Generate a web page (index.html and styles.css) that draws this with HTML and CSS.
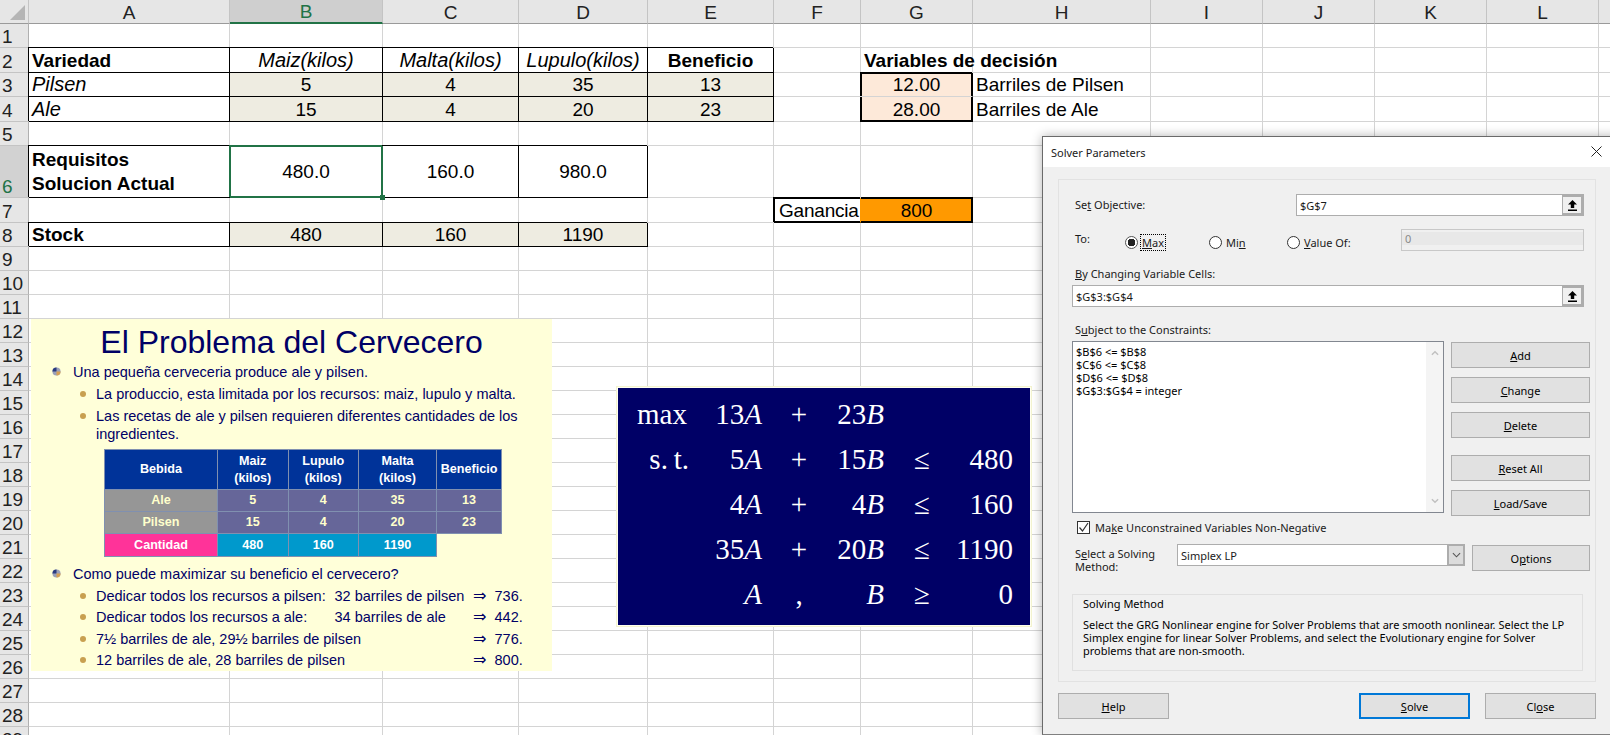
FILE: index.html
```html
<!DOCTYPE html>
<html lang="es">
<head>
<meta charset="UTF-8">
<title>Solver Parameters - El Problema del Cervecero</title>
<link rel="stylesheet" href="styles.css">
</head>
<body>
<table class="sheet">
<colgroup>
<col class="c-head"><col class="c-a"><col class="c-b"><col class="c-c"><col class="c-d"><col class="c-e"><col class="c-f"><col class="c-g"><col class="c-h"><col class="c-i"><col class="c-i"><col class="c-i"><col class="c-i"><col class="c-m">
</colgroup>
<tr class="letters"><th class="corner"><span class="tri"></span></th><th>A</th><th class="on">B</th><th>C</th><th>D</th><th>E</th><th>F</th><th>G</th><th>H</th><th>I</th><th>J</th><th>K</th><th>L</th><th></th></tr>
<tr><th>1</th><td></td><td></td><td></td><td></td><td></td><td></td><td></td><td></td><td></td><td></td><td></td><td></td><td></td></tr>
<tr class="tall"><th>2</th><td class="box left bold">Variedad</td><td class="box ital">Maiz(kilos)</td><td class="box ital">Malta(kilos)</td><td class="box ital">Lupulo(kilos)</td><td class="box bold">Beneficio</td><td></td><td class="left bold">Variables de decisión</td><td></td><td></td><td></td><td></td><td></td><td></td></tr>
<tr><th>3</th><td class="box left ital">Pilsen</td><td class="box fill">5</td><td class="box fill">4</td><td class="box fill">35</td><td class="box fill">13</td><td></td><td class="var var-top">12.00</td><td class="left">Barriles de Pilsen</td><td></td><td></td><td></td><td></td><td></td></tr>
<tr class="tall"><th>4</th><td class="box left ital">Ale</td><td class="box fill">15</td><td class="box fill">4</td><td class="box fill">20</td><td class="box fill">23</td><td></td><td class="var var-bot">28.00</td><td class="left">Barriles de Ale</td><td></td><td></td><td></td><td></td><td></td></tr>
<tr><th>5</th><td></td><td></td><td></td><td></td><td></td><td></td><td></td><td></td><td></td><td></td><td></td><td></td><td></td></tr>
<tr class="req"><th class="sel-row">6</th><td class="box left bold two">Requisitos<br>Solucion Actual</td><td class="box active">480.0<span class="handle"></span></td><td class="box">160.0</td><td class="box">980.0</td><td></td><td></td><td></td><td></td><td></td><td></td><td></td><td></td><td></td></tr>
<tr class="tall"><th>7</th><td></td><td></td><td></td><td></td><td></td><td class="gain-label">Ganancia</td><td class="gain">800</td><td></td><td></td><td></td><td></td><td></td><td></td></tr>
<tr><th>8</th><td class="box left bold">Stock</td><td class="box fill">480</td><td class="box fill">160</td><td class="box fill">1190</td><td></td><td></td><td></td><td></td><td></td><td></td><td></td><td></td><td></td></tr>
<tr><th>9</th><td></td><td></td><td></td><td></td><td></td><td></td><td></td><td></td><td></td><td></td><td></td><td></td><td></td></tr>
<tr><th>10</th><td></td><td></td><td></td><td></td><td></td><td></td><td></td><td></td><td></td><td></td><td></td><td></td><td></td></tr>
<tr><th>11</th><td></td><td></td><td></td><td></td><td></td><td></td><td></td><td></td><td></td><td></td><td></td><td></td><td></td></tr>
<tr><th>12</th><td></td><td></td><td></td><td></td><td></td><td></td><td></td><td></td><td></td><td></td><td></td><td></td><td></td></tr>
<tr><th>13</th><td></td><td></td><td></td><td></td><td></td><td></td><td></td><td></td><td></td><td></td><td></td><td></td><td></td></tr>
<tr><th>14</th><td></td><td></td><td></td><td></td><td></td><td></td><td></td><td></td><td></td><td></td><td></td><td></td><td></td></tr>
<tr><th>15</th><td></td><td></td><td></td><td></td><td></td><td></td><td></td><td></td><td></td><td></td><td></td><td></td><td></td></tr>
<tr><th>16</th><td></td><td></td><td></td><td></td><td></td><td></td><td></td><td></td><td></td><td></td><td></td><td></td><td></td></tr>
<tr><th>17</th><td></td><td></td><td></td><td></td><td></td><td></td><td></td><td></td><td></td><td></td><td></td><td></td><td></td></tr>
<tr><th>18</th><td></td><td></td><td></td><td></td><td></td><td></td><td></td><td></td><td></td><td></td><td></td><td></td><td></td></tr>
<tr><th>19</th><td></td><td></td><td></td><td></td><td></td><td></td><td></td><td></td><td></td><td></td><td></td><td></td><td></td></tr>
<tr><th>20</th><td></td><td></td><td></td><td></td><td></td><td></td><td></td><td></td><td></td><td></td><td></td><td></td><td></td></tr>
<tr><th>21</th><td></td><td></td><td></td><td></td><td></td><td></td><td></td><td></td><td></td><td></td><td></td><td></td><td></td></tr>
<tr><th>22</th><td></td><td></td><td></td><td></td><td></td><td></td><td></td><td></td><td></td><td></td><td></td><td></td><td></td></tr>
<tr><th>23</th><td></td><td></td><td></td><td></td><td></td><td></td><td></td><td></td><td></td><td></td><td></td><td></td><td></td></tr>
<tr><th>24</th><td></td><td></td><td></td><td></td><td></td><td></td><td></td><td></td><td></td><td></td><td></td><td></td><td></td></tr>
<tr><th>25</th><td></td><td></td><td></td><td></td><td></td><td></td><td></td><td></td><td></td><td></td><td></td><td></td><td></td></tr>
<tr><th>26</th><td></td><td></td><td></td><td></td><td></td><td></td><td></td><td></td><td></td><td></td><td></td><td></td><td></td></tr>
<tr><th>27</th><td></td><td></td><td></td><td></td><td></td><td></td><td></td><td></td><td></td><td></td><td></td><td></td><td></td></tr>
<tr><th>28</th><td></td><td></td><td></td><td></td><td></td><td></td><td></td><td></td><td></td><td></td><td></td><td></td><td></td></tr>
<tr><th>29</th><td></td><td></td><td></td><td></td><td></td><td></td><td></td><td></td><td></td><td></td><td></td><td></td><td></td></tr>
</table>

<div class="slide">
    <h1>El Problema del Cervecero</h1>
    <p class="main"><svg class="ball" viewBox="0 0 10 10"><circle cx="5" cy="5" r="4.5" fill="#9aa0b8"/><path d="M5 5V.5A4.5 4.5 0 0 0 .5 5z" fill="#2a3a80"/><path d="M5 5h4.5A4.5 4.5 0 0 1 5 9.5z" fill="#d8a050"/></svg>Una pequeña cerveceria produce ale y pilsen.</p>
    <p class="sub first">La produccio, esta limitada por los recursos: maiz, lupulo y malta.</p>
    <p class="sub">Las recetas de ale y pilsen requieren diferentes cantidades de los ingredientes.</p>
    <table class="recipe">
        <tr class="hd"><td class="w1">Bebida</td><td class="w2">Maiz<br>(kilos)</td><td class="w2">Lupulo<br>(kilos)</td><td class="w3">Malta<br>(kilos)</td><td class="w4">Beneficio</td></tr>
        <tr class="rw"><td class="gray">Ale</td><td>5</td><td>4</td><td>35</td><td>13</td></tr>
        <tr class="rw"><td class="gray">Pilsen</td><td>15</td><td>4</td><td>20</td><td>23</td></tr>
        <tr class="tot"><td class="pink">Cantidad</td><td>480</td><td>160</td><td>1190</td><td class="none"></td></tr>
    </table>
    <p class="main second"><svg class="ball" viewBox="0 0 10 10"><circle cx="5" cy="5" r="4.5" fill="#9aa0b8"/><path d="M5 5V.5A4.5 4.5 0 0 0 .5 5z" fill="#2a3a80"/><path d="M5 5h4.5A4.5 4.5 0 0 1 5 9.5z" fill="#d8a050"/></svg>Como puede maximizar su beneficio el cervecero?</p>
    <div class="answers">
        <span class="a-text">Dedicar todos los recursos a pilsen:</span><span class="a-bar">32 barriles de pilsen</span><span class="a-arrow">⇒</span><span>736.</span>
        <span class="a-text">Dedicar todos los recursos a ale:</span><span class="a-bar">34 barriles de ale</span><span class="a-arrow">⇒</span><span>442.</span>
        <span class="a-text a-wide">7½ barriles de ale, 29½ barriles de pilsen</span><span class="a-arrow">⇒</span><span>776.</span>
        <span class="a-text a-wide">12 barriles de ale, 28 barriles de pilsen</span><span class="a-arrow">⇒</span><span>800.</span>
    </div>
</div>

<div class="model">
    <span>max</span><span>13<i>A</i></span><span class="op">+</span><span>23<i>B</i></span><span></span><span></span>
    <span class="st">s.&thinsp;t.</span><span>5<i>A</i></span><span class="op">+</span><span>15<i>B</i></span><span class="op">≤</span><span>480</span>
    <span></span><span>4<i>A</i></span><span class="op">+</span><span>4<i>B</i></span><span class="op">≤</span><span>160</span>
    <span></span><span>35<i>A</i></span><span class="op">+</span><span>20<i>B</i></span><span class="op">≤</span><span>1190</span>
    <span></span><span><i>A</i></span><span class="op">,</span><span><i>B</i></span><span class="op">≥</span><span>0</span>
</div>

<div class="dialog">
    <div class="titlebar">
        <span>Solver Parameters</span>
        <svg class="close" viewBox="0 0 11 11"><path d="M.5.5l10 10M10.5.5l-10 10" stroke="#222" stroke-width="1" fill="none"/></svg>
    </div>
    <div class="panel">
        <div class="row objective">
            <label class="lbl">Se<u>t</u> Objective:</label>
            <div class="field wide"><span>$G$7</span><span class="ref"><svg viewBox="0 0 9 11"><path d="M4.5 0L9 4.5H6.2V8H2.8V4.5H0zM0 9.5h9V11H0z" fill="#000"/></svg></span></div>
        </div>
        <div class="row target">
            <label class="lbl to">To:</label>
            <span class="radio r-max checked"><span class="dot"></span><span class="focus"><u>M</u>ax</span></span>
            <span class="radio r-min"><span class="dot"></span><span>Mi<u>n</u></span></span>
            <span class="radio r-val"><span class="dot"></span><span><u>V</u>alue Of:</span></span>
            <div class="field disabled"><span>0</span></div>
        </div>
        <label class="lbl block"><u>B</u>y Changing Variable Cells:</label>
        <div class="field full"><span>$G$3:$G$4</span><span class="ref"><svg viewBox="0 0 9 11"><path d="M4.5 0L9 4.5H6.2V8H2.8V4.5H0zM0 9.5h9V11H0z" fill="#000"/></svg></span></div>
        <label class="lbl block">S<u>u</u>bject to the Constraints:</label>
        <div class="row constraints">
            <div class="listbox">
                <div class="lines">$B$6 &lt;= $B$8<br>$C$6 &lt;= $C$8<br>$D$6 &lt;= $D$8<br>$G$3:$G$4 = integer</div>
                <div class="scroll">
                    <svg viewBox="0 0 9 6"><path d="M1 5l3.5-3.5L8 5" stroke="#c0c0c0" stroke-width="1.6" fill="none"/></svg>
                    <svg viewBox="0 0 9 6"><path d="M1 1l3.5 3.5L8 1" stroke="#c0c0c0" stroke-width="1.6" fill="none"/></svg>
                </div>
            </div>
            <div class="side">
                <span class="btn"><u>A</u>dd</span>
                <span class="btn"><u>C</u>hange</span>
                <span class="btn"><u>D</u>elete</span>
                <span class="btn gap"><u>R</u>eset All</span>
                <span class="btn"><u>L</u>oad/Save</span>
            </div>
        </div>
        <div class="row check">
            <span class="box-check"><svg viewBox="0 0 11 11"><path d="M1.5 5.5l3 3.5 5.5-8" stroke="#333" stroke-width="1.2" fill="none"/></svg></span>
            <span>Ma<u>k</u>e Unconstrained Variables Non-Negative</span>
        </div>
        <div class="row method">
            <label class="lbl method-label">S<u>e</u>lect a Solving<br>Method:</label>
            <div class="field combo"><span>Simplex LP</span><span class="drop"><svg viewBox="0 0 10 6"><path d="M1 1l4 4 4-4" stroke="#555" stroke-width="1.2" fill="none"/></svg></span></div>
            <span class="btn options">O<u>p</u>tions</span>
        </div>
        <div class="group">
            <div class="group-title">Solving Method</div>
            <p>Select the GRG Nonlinear engine for Solver Problems that are smooth nonlinear. Select the LP Simplex engine for linear Solver Problems, and select the Evolutionary engine for Solver problems that are non-smooth.</p>
        </div>
    </div>
    <div class="footer">
        <span class="btn foot help"><u>H</u>elp</span>
        <span class="btn foot primary"><u>S</u>olve</span>
        <span class="btn foot">Cl<u>o</u>se</span>
    </div>
</div>
</body>
</html>
```

FILE: styles.css
```css
html,
body {
    margin: 0;
    padding: 0;
    height: 735px;
    overflow: hidden;
    background: #fff;
    font-family: "Liberation Sans", Arial, sans-serif;
}

/* spreadsheet */
.sheet {
    border-collapse: separate;
    border-spacing: 0;
    table-layout: fixed;
    width: 1625px;
    font-size: 19px;
    color: #000;
}

.c-head { width: 29px; }
.c-a { width: 201px; }
.c-b { width: 153px; }
.c-c { width: 136px; }
.c-d { width: 129px; }
.c-e { width: 126px; }
.c-f { width: 87px; }
.c-g { width: 112px; }
.c-h { width: 178px; }
.c-i { width: 112px; }
.c-m { width: 26px; }

.sheet tr { height: 24px; }
.sheet tr.tall { height: 25px; }
.sheet tr.req { height: 52px; }

.sheet td,
.sheet th {
    padding: 0;
    box-sizing: border-box;
    border-right: 1px solid #d4d4d4;
    border-bottom: 1px solid #d4d4d4;
    text-align: center;
    font-weight: normal;
    line-height: 21px;
    white-space: nowrap;
}

.sheet th {
    background: #e6e6e6;
    color: #222;
    border-right-color: #b0b0b0;
    border-bottom-color: #c4c4c4;
    text-align: left;
    padding-left: 2px;
    vertical-align: bottom;
}

.letters th {
    text-align: center;
    padding-left: 0;
    border-right-color: #c4c4c4;
    border-bottom: 1px solid #9a9a9a;
}

.letters th.on {
    background: #cfcfcf;
    color: #217346;
    border-bottom: 2px solid #217346;
}

.corner { position: relative; }

.tri {
    position: absolute;
    right: 3px;
    bottom: 3px;
    width: 0;
    height: 0;
    border-left: 15px solid transparent;
    border-bottom: 15px solid #b5b5b5;
}

.sheet th.sel-row {
    background: #d2d2d2;
    color: #217346;
}

.sheet td.left {
    text-align: left;
    padding-left: 3px;
}

.sheet td.bold { font-weight: bold; }
.sheet td.ital { font-style: italic; font-size: 20px; }
.sheet td.two { line-height: 24px; }

.sheet td.box {
    border-color: #000;
    box-shadow: -1px -1px 0 #000;
}

.sheet td.fill { background: #eeece1; }

.sheet td.var {
    background: #fde9d9;
    border-right-color: #000;
}

.sheet td.var-top {
    box-shadow: -1px -1px 0 #000, inset 1px 1px 0 #000, inset -1px 0 0 #000;
}

.sheet td.var-bot {
    border-bottom-color: #000;
    box-shadow: -1px 0 0 #000, inset 1px 0 0 #000, inset -1px -1px 0 #000;
}

.sheet td.active {
    position: relative;
    border-color: #217346;
    box-shadow: -1px -1px 0 #217346, inset 1px 1px 0 #217346, inset -1px -1px 0 #217346;
}

.handle {
    position: absolute;
    right: -3px;
    bottom: -3px;
    width: 5px;
    height: 5px;
    background: #217346;
}

.sheet td.gain-label {
    text-align: left;
    padding-left: 5px;
    letter-spacing: -0.2px;
    border-color: #000;
    box-shadow: -1px -1px 0 #000, inset 1px 1px 0 #000, inset 0 -1px 0 #000;
    border-right-color: #ff9900;
}

.sheet td.gain {
    background: #ff9900;
    border-color: #000;
    box-shadow: 0 -1px 0 #000, inset 0 1px 0 #000, inset -1px -1px 0 #000;
}

/* pasted slide picture */
.slide {
    position: absolute;
    left: 31px;
    top: 319px;
    width: 521px;
    height: 352px;
    box-sizing: border-box;
    background: #ffffd9;
    color: #000066;
    font-size: 14.5px;
    line-height: 18px;
}

.slide h1 {
    margin: 0;
    padding-top: 2px;
    font-size: 32px;
    line-height: 42px;
    font-weight: normal;
    text-align: center;
}

.slide p { margin: 0; }

.main {
    position: relative;
    padding-left: 42px;
}

.slide .second { margin-top: 8px; }

.ball {
    position: absolute;
    left: 21px;
    top: 4px;
    width: 9px;
    height: 9px;
}

.sub {
    position: relative;
    padding: 0 28px 0 65px;
}

.slide .sub { margin-top: 3.5px; }
.slide .first { margin-top: 4px; }

.sub::before,
.a-text::before {
    content: "";
    position: absolute;
    left: 49px;
    top: 6px;
    width: 6px;
    height: 6px;
    border-radius: 50%;
    background: #c8a050;
}

.recipe {
    border-collapse: collapse;
    table-layout: fixed;
    width: 398px;
    margin: 6.5px 0 0 73px;
    font-size: 12.6px;
    font-weight: bold;
    line-height: 16.5px;
    text-align: center;
    color: #ffffcc;
}

.recipe td {
    padding: 0;
    border: 1px solid #8090b0;
}

.w1 { width: 112px; }
.w2 { width: 69.5px; }
.w3 { width: 77px; }

.recipe .hd { height: 40px; background: #003399; color: #fff; }
.recipe .rw { height: 22px; background: #666699; }
.recipe .tot { height: 23px; background: #0099cc; color: #fff; }
.recipe .gray { background: #969696; }
.recipe .pink { background: #ff3399; }
.recipe td.none { background: #ffffd9; border-width: 0; border-top-width: 1px; }

.answers {
    display: grid;
    grid-template-columns: 238.5px 138.5px 21.5px auto;
    row-gap: 3.3px;
    margin: 4px 0 0 65px;
}

.a-text { position: relative; }
.a-text::before { left: -16px; }
.a-wide { grid-column: 1 / span 2; }
.a-bar { white-space: nowrap; }
.a-arrow { font-family: "DejaVu Sans", sans-serif; font-size: 16px; }

/* objective and constraints, pasted as a picture */
.model {
    position: absolute;
    left: 617px;
    top: 387px;
    width: 412px;
    height: 233px;
    border: 1px solid #fffff0;
    outline: 1px solid #f4f4d0;
    padding-bottom: 4px;
    background: #000066;
    color: #fff;
    font-family: "Liberation Serif", "Times New Roman", serif;
    font-size: 29px;
    line-height: 45px;
    text-align: right;
    display: grid;
    grid-template-columns: 69px 75px 74px 48px 72px 57px;
    grid-auto-rows: 45px;
    align-content: center;
}

.model .op { text-align: center; }
.model span:nth-child(6n + 5) { padding-left: 4px; }
.model .st { margin-right: -2px; }

/* solver window */
.dialog {
    position: absolute;
    left: 1042px;
    top: 136px;
    width: 580px;
    height: 599px;
    box-sizing: border-box;
    background: #f0f0f0;
    border: 1px solid #6a6a6a;
    border-bottom-color: #808080;
    box-shadow: 0 0 10px rgba(0, 0, 0, 0.3);
    font-family: "Noto Sans", sans-serif;
    font-size: 11px;
    line-height: 13px;
    color: #1a1a1a;
}

.titlebar {
    height: 30px;
    background: #fff;
    display: flex;
    align-items: center;
    padding-left: 8px;
    position: relative;
}

.close {
    position: absolute;
    left: 548px;
    top: 9px;
    width: 11px;
    height: 11px;
}

.panel {
    margin: 12px 0 0 15px;
    width: 538px;
    height: 503px;
    box-sizing: border-box;
    border: 1px solid #e2e2e2;
    padding: 14px 0 0 13px;
}

.row { display: flex; }

.lbl { display: block; padding-left: 3px; }

.objective { align-items: center; }
.objective .lbl { width: 221px; margin-top: -2px; }

.field {
    display: flex;
    align-items: center;
    height: 22px;
    box-sizing: border-box;
    background: #fff;
    border: 1px solid #adadad;
    padding-left: 3px;
}

.field > span:first-child { flex: 1; }

.wide { width: 288px; }
.full { width: 512px; margin-top: 5px; }

.ref {
    width: 22px;
    height: 22px;
    box-sizing: border-box;
    margin-right: -1px;
    flex: none;
    border: 3px solid #adadad;
    border-left-width: 1px;
    background: #f0f0f0;
    display: flex;
    align-items: center;
    justify-content: center;
}

.ref svg { width: 9px; height: 11px; }

.target {
    position: relative;
    width: 512px;
    margin-top: 13px;
    height: 22px;
    align-items: center;
}

.to { width: 0; white-space: nowrap; margin-top: -3px; }

.radio {
    position: absolute;
    top: 7px;
    display: flex;
    align-items: center;
    gap: 4px;
}

.r-max { left: 53px; }
.r-min { left: 137px; }
.r-val { left: 215px; }

.dot {
    width: 13px;
    height: 13px;
    box-sizing: border-box;
    border: 1px solid #333;
    border-radius: 50%;
    background: #fff;
    flex: none;
}

.checked .dot {
    border-color: #555;
    background: radial-gradient(circle, #222 0, #222 3.6px, #fff 4px);
}

.focus {
    outline: 1px dotted #000;
    outline-offset: 1px;
}

.disabled {
    width: 183px;
    margin-left: auto;
    background: linear-gradient(#f0f0f0 2px, #e8e8e8 2px, #e8e8e8 15px, #f0f0f0 15px);
    color: #888;
    border: 1px solid #c8c8c8;
    padding-bottom: 4px;
}

.block { margin-top: 16px; }

.constraints { margin-top: 5px; gap: 7px; height: 172px; }

.listbox {
    width: 372px;
    height: 172px;
    box-sizing: border-box;
    background: #fff;
    border: 1px solid #828790;
    display: flex;
    justify-content: space-between;
}

.lines { padding: 3px 0 0 3px; color: #000; }

.scroll {
    width: 17px;
    background: #f4f4f4;
    display: flex;
    flex-direction: column;
    justify-content: space-between;
    align-items: center;
    padding: 8px 0;
}

.scroll svg { width: 8px; height: 6px; }

.side {
    display: flex;
    flex-direction: column;
    gap: 9px;
    margin-top: 1px;
}

.btn {
    display: flex;
    align-items: center;
    justify-content: center;
    flex: none;
    width: 139px;
    height: 26px;
    box-sizing: border-box;
    background: #e1e1e1;
    border: 1px solid #adadad;
    color: #000;
}

.btn.gap { margin-top: 8px; }

.check {
    align-items: center;
    gap: 5px;
    margin-top: 8px;
    padding-left: 5px;
    height: 12px;
}

.box-check {
    width: 13px;
    height: 13px;
    box-sizing: border-box;
    border: 1px solid #333;
    background: #fff;
    display: flex;
    flex: none;
}

.box-check svg { width: 11px; height: 11px; }

.method { margin-top: 11px; align-items: flex-start; }

.method-label { width: 102px; padding-top: 3px; }

.combo { width: 288px; padding-left: 3px; }

.drop {
    width: 18px;
    height: 22px;
    box-sizing: border-box;
    margin-right: -1px;
    flex: none;
    border: 2px solid #adadad;
    background: #dcdcdc;
    display: flex;
    align-items: center;
    justify-content: center;
}

.drop svg { width: 9px; height: 6px; }

.btn.options { width: 118px; margin: 1px 0 0 7px; }

.group {
    width: 511px;
    height: 77px;
    box-sizing: border-box;
    margin-top: 21px;
    border: 1px solid #e0e0e0;
    padding: 2px 10px;
    color: #000;
}

.group-title { margin-bottom: 8px; }
.group p { margin: 0; }

.footer {
    display: flex;
    gap: 15px;
    margin: 11px 0 0 15px;
    width: 538px;
}

.btn.foot { width: 111px; }
.help { margin-right: auto; }

.primary {
    border: 2px solid #0078d7;
}
```
